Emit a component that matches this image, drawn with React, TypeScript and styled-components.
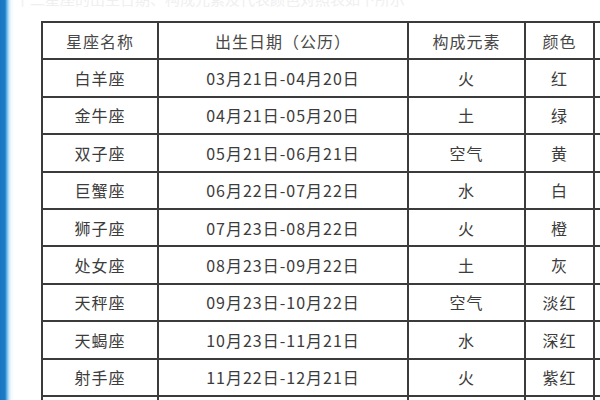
import React from 'react';
import styled, { createGlobalStyle } from 'styled-components';

const GlobalStyle = createGlobalStyle`
  html, body {
    margin: 0;
    padding: 0;
    background: #fff;
    overflow: hidden;
  }
  body {
    font-family: "Noto Sans CJK SC", "Liberation Sans", sans-serif;
  }
`;

const Page = styled.div`
  display: flex;
  width: 600px;
  height: 400px;
  overflow: hidden;
  background: #fff;
`;

const SideBar = styled.div`
  flex: 0 0 14px;
  background: linear-gradient(
    to right,
    #1a76c0 0px,
    #1d7cc6 5px,
    #6cb8ec 7px,
    #c6e6fa 9px,
    #f2f9fe 11px,
    #ffffff 14px
  );
`;

const Content = styled.div`
  flex: 1;
  padding-left: 27px;
  overflow: hidden;
`;

const Caption = styled.div`
  margin: -10px 0 0 -26px;
  height: 14px;
  font-size: 15px;
  line-height: 18px;
  color: #efefef;
  white-space: nowrap;
`;

const Table = styled.table`
  margin-top: 17px;
  border-collapse: collapse;
  table-layout: fixed;
  width: 680px;
  color: #3a3a3a;
  font-size: 16px;
  letter-spacing: 1px;
`;

const Cell = styled.td<{ $head?: boolean }>`
  height: 35.4px;
  padding: 0;
  border: 2px solid #3b3b3b;
  text-align: center;
  vertical-align: middle;
  white-space: nowrap;
  font-weight: 400;
  color: ${p => (p.$head ? '#484848' : '#3c3c3c')};
`;

const signs = [
  ['白羊座', '03月21日-04月20日', '火', '红'],
  ['金牛座', '04月21日-05月20日', '土', '绿'],
  ['双子座', '05月21日-06月21日', '空气', '黄'],
  ['巨蟹座', '06月22日-07月22日', '水', '白'],
  ['狮子座', '07月23日-08月22日', '火', '橙'],
  ['处女座', '08月23日-09月22日', '土', '灰'],
  ['天秤座', '09月23日-10月22日', '空气', '淡红'],
  ['天蝎座', '10月23日-11月21日', '水', '深红'],
  ['射手座', '11月22日-12月21日', '火', '紫红'],
  ['摩羯座', '12月22日-01月19日', '土', '黑'],
];

const App: React.FC = () => (
  <Page>
    <GlobalStyle />
    <SideBar />
    <Content>
      <Caption>十二星座的出生日期、构成元素及代表颜色对照表如下所示</Caption>
      <Table>
        <colgroup>
          <col style={{ width: 116 }} />
          <col style={{ width: 250 }} />
          <col style={{ width: 117 }} />
          <col style={{ width: 69 }} />
          <col style={{ width: 128 }} />
        </colgroup>
        <thead>
          <tr>
            <Cell as="th" $head>星座名称</Cell>
            <Cell as="th" $head>出生日期（公历）</Cell>
            <Cell as="th" $head>构成元素</Cell>
            <Cell as="th" $head>颜色</Cell>
            <Cell as="th" $head />
          </tr>
        </thead>
        <tbody>
          {signs.map(row => (
            <tr key={row[0]}>
              {row.map((v, i) => (
                <Cell key={i}>{v}</Cell>
              ))}
              <Cell />
            </tr>
          ))}
        </tbody>
      </Table>
    </Content>
  </Page>
);

export default App;
